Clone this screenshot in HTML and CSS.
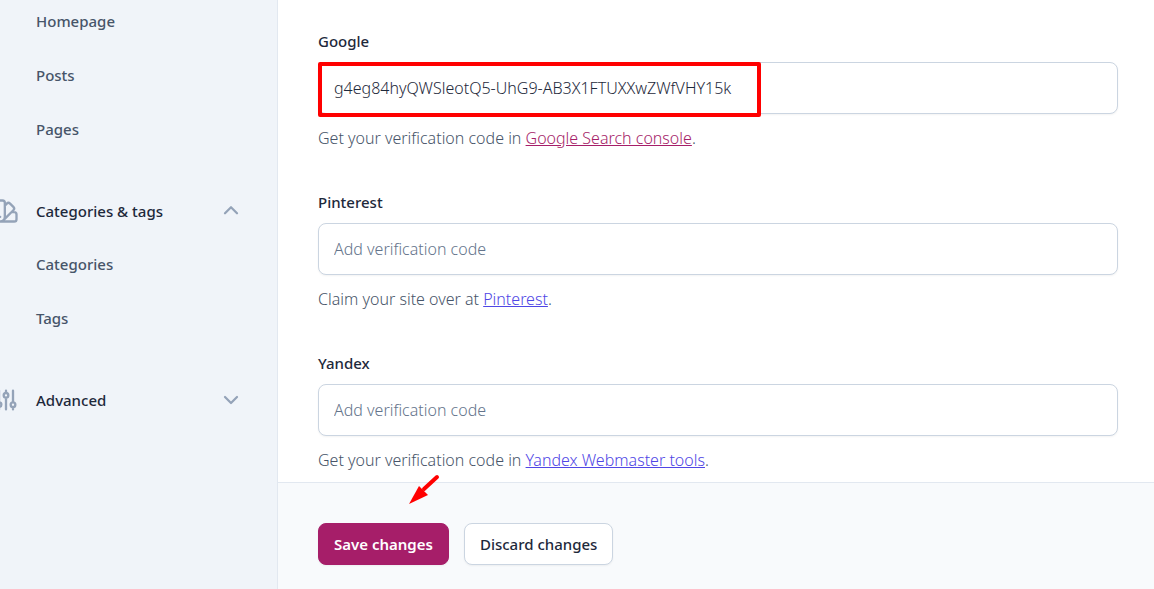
FILE: index.html
```html
<!DOCTYPE html>
<html lang="en">
<head>
<meta charset="utf-8">
<meta name="viewport" content="width=device-width, initial-scale=1">
<title>Site connections</title>
<link rel="stylesheet" href="styles.css">
</head>
<body>

<nav class="sidenav">
  <ul>
    <li><a href="#">Homepage</a></li>
    <li><a href="#">Posts</a></li>
    <li><a href="#">Pages</a></li>
  </ul>

  <button type="button" class="group" aria-expanded="true">
    <svg class="group-icon" viewBox="0 0 24 24"><path d="M7 21a4 4 0 01-4-4V5a2 2 0 012-2h4a2 2 0 012 2v12a4 4 0 01-4 4zm0 0h12a2 2 0 002-2v-4a2 2 0 00-2-2h-2.343M11 7.343l1.657-1.657a2 2 0 012.828 0l2.829 2.829a2 2 0 010 2.828l-8.486 8.485M7 17h.01"/></svg>
    <span>Categories &amp; tags</span>
    <svg class="chevron" viewBox="0 0 24 24"><path d="M4 15l8-8 8 8"/></svg>
  </button>
  <ul>
    <li><a href="#">Categories</a></li>
    <li><a href="#">Tags</a></li>
  </ul>

  <button type="button" class="group" aria-expanded="false">
    <svg class="group-icon" viewBox="0 0 24 24"><path d="M12 6V4m0 2a2 2 0 100 4m0-4a2 2 0 110 4m-6 8a2 2 0 100-4m0 4a2 2 0 110-4m0 4v2m0-6V4m6 6v10m6-2a2 2 0 100-4m0 4a2 2 0 110-4m0 4v2m0-6V4"/></svg>
    <span>Advanced</span>
    <svg class="chevron" viewBox="0 0 24 24"><path d="M4 8l8 8 8-8"/></svg>
  </button>
</nav>

<form class="main">
  <div class="fields">
    <div class="field">
      <label for="google">Google</label>
      <div class="control">
        <input type="text" id="google" value="g4eg84hyQWSleotQ5-UhG9-AB3X1FTUXXwZWfVHY15k" placeholder="Add verification code">
        <div class="highlight"></div>
      </div>
      <p>Get your verification code in <a href="#" class="visited">Google Search console</a>.</p>
    </div>
    <div class="field">
      <label for="pinterest">Pinterest</label>
      <div class="control">
        <input type="text" id="pinterest" placeholder="Add verification code">
      </div>
      <p>Claim your site over at <a href="#">Pinterest</a>.</p>
    </div>
    <div class="field">
      <label for="yandex">Yandex</label>
      <div class="control">
        <input type="text" id="yandex" placeholder="Add verification code">
      </div>
      <p>Get your verification code in <a href="#">Yandex Webmaster tools</a>.</p>
    </div>
  </div>

  <div class="actions">
    <button type="submit" class="btn save">Save changes</button>
    <button type="button" class="btn discard">Discard changes</button>
    <svg class="arrow" viewBox="0 0 32 32"><path class="shaft" d="M28 4L15 16"/><path d="M0 31L10 13l4 4 5 5z"/></svg>
  </div>
</form>

</body>
</html>
```
FILE: styles.css
```css
* {
  box-sizing: border-box;
}

body {
  margin: 0;
  display: flex;
  min-height: 100vh;
  font-family: "Segoe UI", "Noto Sans", "Open Sans", sans-serif;
  font-size: 15px;
  line-height: 24px;
  color: #1e293b;
  background: #fff;
}

input, button {
  font: inherit;
  color: inherit;
}

/* Sidebar */
.sidenav {
  flex: 0 0 278px;
  padding: 9px 36px 0;
  overflow: hidden;
  background: #f0f4f9;
  border-right: 1px solid #e2e8f0;
}

.sidenav ul {
  margin: 0;
  padding: 0;
  list-style: none;
  display: flex;
  flex-direction: column;
  gap: 30px;
}

.sidenav a {
  display: block;
  color: #475569;
  font-weight: 500;
  text-decoration: none;
}

.group {
  display: flex;
  align-items: center;
  width: 248px;
  margin: 56px 0 27px -44px;
  padding: 0;
  border: 0;
  background: none;
  text-align: left;
  font-weight: 500;
  cursor: pointer;
}

.group span {
  flex: 1;
  margin-left: 16px;
}

.group svg {
  fill: none;
  stroke: #94a3b8;
  stroke-width: 2;
  stroke-linecap: round;
  stroke-linejoin: round;
}

.group-icon {
  width: 28px;
  height: 28px;
}

.group .chevron {
  width: 18px;
  height: 18px;
  stroke-width: 3;
}

/* Form */
.main {
  flex: 1;
  min-width: 0;
  display: flex;
  flex-direction: column;
}

.fields {
  flex: 1;
  display: flex;
  flex-direction: column;
  gap: 40px;
  padding: 29px 36px 10px 40px;
}

.field label {
  display: block;
  margin-bottom: 9px;
  font-weight: 500;
}

.field p {
  margin: 12px 0 0;
  color: #475569;
  font-size: 16px;
  font-weight: 300;
}

.field p a {
  color: #4f46e5;
}

.field p a.visited {
  color: #a61e69;
}

.control {
  position: relative;
}

.control input {
  display: block;
  width: 100%;
  height: 52px;
  padding: 0 15px;
  border: 1px solid #cbd5e1;
  border-radius: 8px;
  background: #fff;
  box-shadow: 0 1px 2px rgba(0, 0, 0, 0.05);
  font-size: 16px;
  font-weight: 300;
}

.control input::placeholder {
  color: #64748b;
  opacity: 1;
}

.highlight {
  position: absolute;
  top: 0;
  left: 0;
  width: 443px;
  height: 55px;
  border: 4px solid #f00;
  border-radius: 2px;
  pointer-events: none;
}

/* Save bar */
.actions {
  position: relative;
  display: flex;
  gap: 15px;
  padding: 40px 40px 24px;
  background: #f8fafc;
  border-top: 1px solid #e2e8f0;
}

.btn {
  height: 42px;
  padding: 0 15px;
  border: 1px solid #cbd5e1;
  border-radius: 8px;
  background: #fff;
  font-weight: 500;
  box-shadow: 0 1px 2px rgba(0, 0, 0, 0.05);
  cursor: pointer;
}

.save {
  border-color: #a61e69;
  background: #a61e69;
  color: #fff;
  font-weight: 600;
}

.arrow {
  position: absolute;
  top: -10px;
  left: 131px;
  width: 32px;
  height: 32px;
  fill: #f00;
}

.arrow .shaft {
  stroke: #f00;
  stroke-width: 4;
  stroke-linecap: round;
}
```
